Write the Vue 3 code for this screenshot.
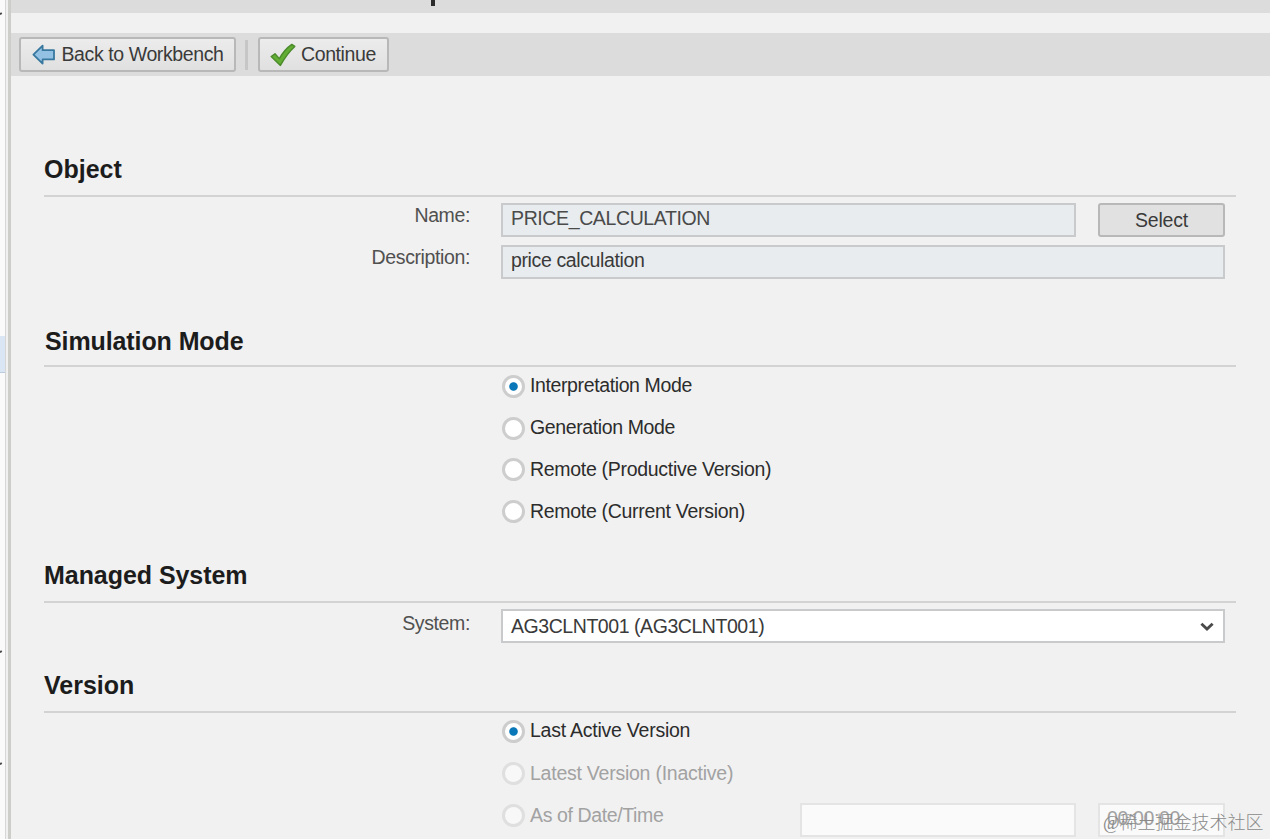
<template>
  <div class="screen">
    <aside class="nav-pane">
      <span class="nav-tick tick-a"></span>
      <span class="nav-selected"></span>
      <span class="nav-tick tick-b"></span>
      <span class="nav-tick tick-c"></span>
    </aside>
    <div class="splitter"></div>

    <main class="content">
      <div class="title-bar"><span class="title-tail"></span></div>
      <div class="toolbar">
        <button class="btn back">
          <svg width="24" height="22" viewBox="0 0 24 22">
            <path d="M1.4 10.6 L10.6 1.6 V6.2 H22 V15.4 H10.6 V19.6 Z" fill="#93c1e4" stroke="#38789e" stroke-width="1.8" stroke-linejoin="round" />
          </svg>
          <span>Back to Workbench</span>
        </button>
        <i class="separator"></i>
        <button class="btn continue">
          <svg width="26" height="24" viewBox="0 0 26 24">
            <path d="M1.2 13.6 L5 10.8 L9.3 15.6 Q14.5 6.5 21.8 1.4 L24.8 3.4 Q17 10.5 10.4 22.4 Z" fill="#62ad33" stroke="#4a8a2a" stroke-width="1.4" stroke-linejoin="round" />
          </svg>
          <span>Continue</span>
        </button>
      </div>

      <section class="group object">
        <h2>Object</h2>
        <div class="row">
          <label class="name-label">Name:</label>
          <div class="field readonly name">{{ form.name }}</div>
          <button class="btn select">Select</button>
        </div>
        <div class="row">
          <label class="desc-label">Description:</label>
          <div class="field readonly desc">{{ form.description }}</div>
        </div>
      </section>

      <section class="group simulation">
        <h2>Simulation Mode</h2>
        <div v-for="m in modes" :key="m.id" class="radio" :class="m.id" @click="mode = m.id">
          <span class="dot" :class="{ on: mode === m.id }"></span>
          <span class="radio-text">{{ m.label }}</span>
        </div>
      </section>

      <section class="group managed">
        <h2>Managed System</h2>
        <div class="row">
          <label class="system-label">System:</label>
          <div class="field dropdown">
            <span>{{ form.system }}</span>
            <svg width="14" height="10" viewBox="0 0 14 10">
              <path d="M1.4 1.8 L7 7 L12.6 1.8" fill="none" stroke="#4a4a4a" stroke-width="2.9" />
            </svg>
          </div>
        </div>
      </section>

      <section class="group version">
        <h2>Version</h2>
        <div v-for="v in versions" :key="v.id" class="radio" :class="[v.id, { disabled: v.disabled }]">
          <span class="dot" :class="{ on: version === v.id }"></span>
          <span class="radio-text">{{ v.label }}</span>
          <template v-if="v.id === 'asof'">
            <div class="field off date"></div>
            <div class="field off time">{{ form.time }}</div>
          </template>
        </div>
      </section>
    </main>

    <div class="watermark"><span class="at">@</span>稀土掘金技术社区</div>
  </div>
</template>

<script setup>
import { ref, reactive } from 'vue';

const form = reactive({
  name: 'PRICE_CALCULATION',
  description: 'price calculation',
  system: 'AG3CLNT001 (AG3CLNT001)',
  time: '00:00:00',
});

const mode = ref('interpretation');
const modes = [
  { id: 'interpretation', label: 'Interpretation Mode' },
  { id: 'generation', label: 'Generation Mode' },
  { id: 'productive', label: 'Remote (Productive Version)' },
  { id: 'current', label: 'Remote (Current Version)' },
];

const version = ref('active');
const versions = [
  { id: 'active', label: 'Last Active Version' },
  { id: 'inactive', label: 'Latest Version (Inactive)', disabled: true },
  { id: 'asof', label: 'As of Date/Time', disabled: true },
];
</script>

<style>
body {
  margin: 0;
  overflow: hidden;
}
</style>

<style scoped>
.screen {
  position: relative;
  display: flex;
  width: 1270px;
  height: 839px;
  overflow: hidden;
  background: #f1f1f1;
  color: #3a3a3a;
  font-family: "Liberation Sans", Arial, sans-serif;
  font-size: 19.5px;
  letter-spacing: -0.38px;
}

/* edge of the navigation pane */
.nav-pane {
  position: relative;
  flex: none;
  width: 5px;
  overflow: hidden;
  background: #fafafa;
  border-right: 1px solid #d6d6d6;
}

.nav-tick {
  position: absolute;
  left: -2px;
  width: 4px;
  height: 2px;
  background: #444;
  transform: rotate(-25deg);
}

.tick-a {
  top: 13px;
}

.tick-b {
  top: 651px;
}

.tick-c {
  top: 763px;
}

.nav-selected {
  position: absolute;
  top: 336px;
  left: 0;
  width: 5px;
  height: 36px;
  background: #dae6f3;
  border-bottom: 1px solid #bccbdc;
}

.splitter {
  flex: none;
  width: 2px;
  background: #f0f0f0;
  border-right: 3px solid #cdcdca;
}

.content {
  flex: 1;
  min-width: 0;
}

.title-bar {
  height: 13px;
  background: #dcdcdc;
}

.title-tail {
  display: block;
  width: 4px;
  height: 6px;
  margin-left: 420px;
  background: #2c2c2c;
}

.toolbar {
  display: flex;
  align-items: flex-start;
  box-sizing: border-box;
  height: 43px;
  margin-top: 20px;
  padding: 4px 0 0 8px;
  background: #dcdcdc;
}

.btn {
  display: flex;
  align-items: center;
  box-sizing: border-box;
  height: 35px;
  margin: 0;
  padding: 0;
  border: 2px solid #b8b8b8;
  border-radius: 3px;
  background: linear-gradient(#ececec, #e0e0e0);
  color: #3a3a3a;
  font-family: inherit;
  font-size: 19.5px;
  letter-spacing: -0.4px;
  line-height: 31px;
  white-space: nowrap;
}

.btn svg {
  flex: none;
}

.back {
  width: 217px;
  padding-left: 11px;
}

.back span {
  margin-left: 5.5px;
}

.separator {
  width: 3px;
  height: 30px;
  margin: 3px 10px 0 9px;
  background: #c6c6c6;
}

.continue {
  width: 131px;
  padding-left: 10px;
}

.continue span {
  margin-left: 5px;
}

.group {
  box-sizing: border-box;
  margin-left: 33px;
  width: 1192px;
}

.group h2 {
  margin: 0;
  padding-bottom: 11px;
  border-bottom: 2px solid #d3d3d3;
  color: #1c1c1c;
  font-size: 25px;
  font-weight: bold;
  letter-spacing: 0;
  line-height: 30px;
}

.object {
  height: 250px;
  padding-top: 78px;
}

.object h2 {
  margin-bottom: 6px;
}

.simulation {
  height: 234px;
}

.simulation h2 {
  padding: 0 0 9px 1px;
  margin-bottom: 7px;
  letter-spacing: -0.1px;
}

.managed {
  height: 110px;
}

.managed h2 {
  margin-bottom: 6px;
  letter-spacing: -0.05px;
}

.version h2 {
  margin-bottom: 6px;
}

.row {
  display: flex;
  height: 34px;
  margin-bottom: 8px;
}

.row label {
  width: 426px;
  margin-right: 31px;
  color: #505050;
  line-height: 24px;
  text-align: right;
}

.row .system-label {
  line-height: 28px;
}

.field {
  box-sizing: border-box;
  height: 34px;
  padding-left: 8px;
  border: 2px solid #c8cacb;
  line-height: 27px;
  white-space: nowrap;
}

.readonly {
  background: #e8ecef;
}

.name {
  width: 575px;
  color: #4a4a4a;
}

.desc {
  width: 724px;
}

.select {
  justify-content: center;
  width: 127px;
  height: 34px;
  margin-left: 22px;
  background: #e1e1e1;
  letter-spacing: -0.2px;
}

.dropdown {
  display: flex;
  justify-content: space-between;
  width: 724px;
  padding-right: 9px;
  background: #fff;
  letter-spacing: -0.44px;
  line-height: 30px;
}

.dropdown svg {
  margin-top: 11px;
}

.radio {
  display: flex;
  align-items: center;
  height: 24px;
  margin: 0 0 18px 457.5px;
  color: #2c2c2c;
}

.dot {
  flex: none;
  box-sizing: border-box;
  width: 23px;
  height: 23px;
  border: 3px solid #cdcdcd;
  border-radius: 50%;
  background: #fff;
}

.dot.on {
  background: radial-gradient(circle, #0a78b8 0 3.8px, #fff 4.7px);
}

/* the remote modes sit slightly higher against their label */
.productive .dot,
.current .dot {
  margin-bottom: 2px;
}

.radio-text {
  width: 269px;
  margin-left: 5.5px;
  line-height: 22px;
  padding-bottom: 2px;
  white-space: nowrap;
}

.productive .radio-text,
.current .radio-text {
  letter-spacing: -0.3px;
}

.active .radio-text,
.inactive .radio-text {
  letter-spacing: -0.24px;
}

.asof .radio-text,
.inactive .radio-text {
  padding-bottom: 0;
}

.disabled {
  color: #a2a2a2;
}

.disabled .dot {
  border-color: #dfdfdf;
  background: #f8f8f8;
}

.off {
  flex: none;
  align-self: flex-start;
  border-color: #e4e4e4;
  background: #fafafa;
}

.date {
  width: 276px;
  margin-left: 1px;
}

.time {
  width: 127px;
  margin-left: 22px;
  padding-left: 7px;
}

.watermark {
  position: absolute;
  left: 1103px;
  top: 807px;
  color: #8a8a8a;
  font-family: "Noto Sans CJK SC", sans-serif;
  font-size: 18px;
  font-weight: 300;
  letter-spacing: 0;
  line-height: 28px;
  white-space: nowrap;
}

.at {
  font-family: "Liberation Serif", serif;
}
</style>
